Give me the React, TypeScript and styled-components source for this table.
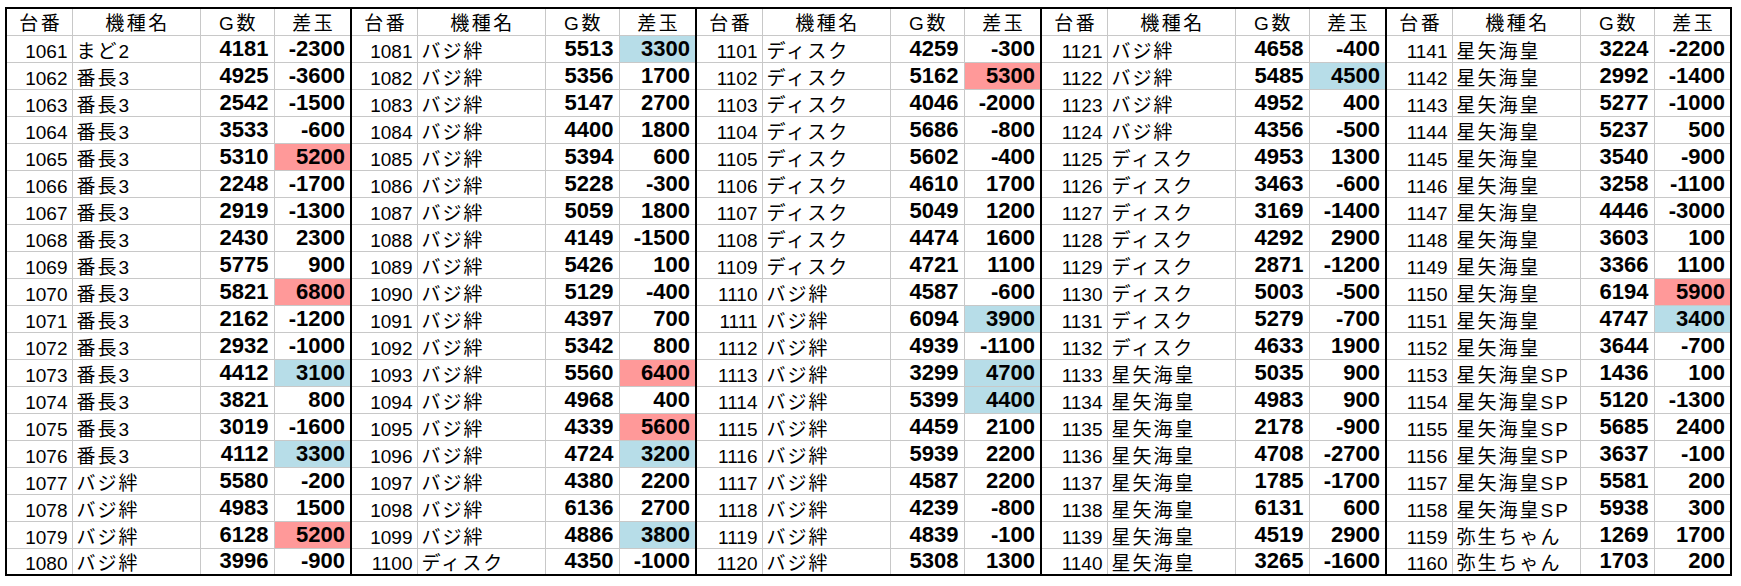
import styled, { createGlobalStyle } from "styled-components";

const GlobalStyle = createGlobalStyle`
  body {
    margin: 0;
    background: #ffffff;
  }
`;

type Row = [number, string, number, number];

const BAJI = "バジ絆";
const DISK = "ディスク";
const BAN = "番長3";
const SEIYA = "星矢海皇";
const SEIYA_SP = "星矢海皇SP";
const YAYOI = "弥生ちゃん";

const groups: Row[][] = [
  [
    [1061, "まど2", 4181, -2300],
    [1062, BAN, 4925, -3600],
    [1063, BAN, 2542, -1500],
    [1064, BAN, 3533, -600],
    [1065, BAN, 5310, 5200],
    [1066, BAN, 2248, -1700],
    [1067, BAN, 2919, -1300],
    [1068, BAN, 2430, 2300],
    [1069, BAN, 5775, 900],
    [1070, BAN, 5821, 6800],
    [1071, BAN, 2162, -1200],
    [1072, BAN, 2932, -1000],
    [1073, BAN, 4412, 3100],
    [1074, BAN, 3821, 800],
    [1075, BAN, 3019, -1600],
    [1076, BAN, 4112, 3300],
    [1077, BAJI, 5580, -200],
    [1078, BAJI, 4983, 1500],
    [1079, BAJI, 6128, 5200],
    [1080, BAJI, 3996, -900],
  ],
  [
    [1081, BAJI, 5513, 3300],
    [1082, BAJI, 5356, 1700],
    [1083, BAJI, 5147, 2700],
    [1084, BAJI, 4400, 1800],
    [1085, BAJI, 5394, 600],
    [1086, BAJI, 5228, -300],
    [1087, BAJI, 5059, 1800],
    [1088, BAJI, 4149, -1500],
    [1089, BAJI, 5426, 100],
    [1090, BAJI, 5129, -400],
    [1091, BAJI, 4397, 700],
    [1092, BAJI, 5342, 800],
    [1093, BAJI, 5560, 6400],
    [1094, BAJI, 4968, 400],
    [1095, BAJI, 4339, 5600],
    [1096, BAJI, 4724, 3200],
    [1097, BAJI, 4380, 2200],
    [1098, BAJI, 6136, 2700],
    [1099, BAJI, 4886, 3800],
    [1100, DISK, 4350, -1000],
  ],
  [
    [1101, DISK, 4259, -300],
    [1102, DISK, 5162, 5300],
    [1103, DISK, 4046, -2000],
    [1104, DISK, 5686, -800],
    [1105, DISK, 5602, -400],
    [1106, DISK, 4610, 1700],
    [1107, DISK, 5049, 1200],
    [1108, DISK, 4474, 1600],
    [1109, DISK, 4721, 1100],
    [1110, BAJI, 4587, -600],
    [1111, BAJI, 6094, 3900],
    [1112, BAJI, 4939, -1100],
    [1113, BAJI, 3299, 4700],
    [1114, BAJI, 5399, 4400],
    [1115, BAJI, 4459, 2100],
    [1116, BAJI, 5939, 2200],
    [1117, BAJI, 4587, 2200],
    [1118, BAJI, 4239, -800],
    [1119, BAJI, 4839, -100],
    [1120, BAJI, 5308, 1300],
  ],
  [
    [1121, BAJI, 4658, -400],
    [1122, BAJI, 5485, 4500],
    [1123, BAJI, 4952, 400],
    [1124, BAJI, 4356, -500],
    [1125, DISK, 4953, 1300],
    [1126, DISK, 3463, -600],
    [1127, DISK, 3169, -1400],
    [1128, DISK, 4292, 2900],
    [1129, DISK, 2871, -1200],
    [1130, DISK, 5003, -500],
    [1131, DISK, 5279, -700],
    [1132, DISK, 4633, 1900],
    [1133, SEIYA, 5035, 900],
    [1134, SEIYA, 4983, 900],
    [1135, SEIYA, 2178, -900],
    [1136, SEIYA, 4708, -2700],
    [1137, SEIYA, 1785, -1700],
    [1138, SEIYA, 6131, 600],
    [1139, SEIYA, 4519, 2900],
    [1140, SEIYA, 3265, -1600],
  ],
  [
    [1141, SEIYA, 3224, -2200],
    [1142, SEIYA, 2992, -1400],
    [1143, SEIYA, 5277, -1000],
    [1144, SEIYA, 5237, 500],
    [1145, SEIYA, 3540, -900],
    [1146, SEIYA, 3258, -1100],
    [1147, SEIYA, 4446, -3000],
    [1148, SEIYA, 3603, 100],
    [1149, SEIYA, 3366, 1100],
    [1150, SEIYA, 6194, 5900],
    [1151, SEIYA, 4747, 3400],
    [1152, SEIYA, 3644, -700],
    [1153, SEIYA_SP, 1436, 100],
    [1154, SEIYA_SP, 5120, -1300],
    [1155, SEIYA_SP, 5685, 2400],
    [1156, SEIYA_SP, 3637, -100],
    [1157, SEIYA_SP, 5581, 200],
    [1158, SEIYA_SP, 5938, 300],
    [1159, YAYOI, 1269, 1700],
    [1160, YAYOI, 1703, 200],
  ],
];

const colWidths = [66, 128, 74, 77];
const headers = ["台番", "機種名", "G数", "差玉"];

type Fill = "none" | "red" | "blue";

// 5000以上は赤、3000以上は青
const fillFor = (diff: number): Fill =>
  diff >= 5000 ? "red" : diff >= 3000 ? "blue" : "none";

const fillColors: Record<Fill, string> = {
  none: "transparent",
  red: "#ff9999",
  blue: "#b7dde8",
};

export default function App() {
  return (
    <>
      <GlobalStyle />
      <Page>
        <Sheet>
          <colgroup>
            {groups.map((_, g) =>
              colWidths.map((w, c) => <col key={`${g}-${c}`} style={{ width: w }} />)
            )}
          </colgroup>
          <thead>
            <tr>
              {groups.map((_, g) =>
                headers.map((h, c) => (
                  <HeadCell key={`${g}-${c}`} $groupStart={c === 0}>
                    {h}
                  </HeadCell>
                ))
              )}
            </tr>
          </thead>
          <tbody>
            {groups[0].map((_, r) => (
              <tr key={r}>
                {groups.map((group, g) => {
                  const [no, name, games, diff] = group[r];
                  return [
                    <NumCell key={`${g}-no`} $groupStart>
                      {no}
                    </NumCell>,
                    <NameCell key={`${g}-name`}>{name}</NameCell>,
                    <ValueCell key={`${g}-g`}>{games}</ValueCell>,
                    <ValueCell key={`${g}-d`} $fill={fillFor(diff)}>
                      {diff}
                    </ValueCell>,
                  ];
                })}
              </tr>
            ))}
          </tbody>
        </Sheet>
      </Page>
    </>
  );
}

const Page = styled.div`
  padding: 7px 0 0 5px;
`;

const Sheet = styled.table`
  border-collapse: collapse;
  table-layout: fixed;
  border: 2px solid #000000;
  font-family: "Liberation Sans", "Noto Sans CJK JP", sans-serif;
  color: #000000;

  tr {
    height: 27px;
  }
`;

const BaseCell = styled.td<{ $groupStart?: boolean }>`
  box-sizing: border-box;
  height: 27px;
  padding: 0 5px 2px 5px;
  border: 1px solid #c8c8c8;
  border-left: ${(p) => (p.$groupStart ? "2px solid #000000" : "1px solid #c8c8c8")};
  vertical-align: bottom;
  line-height: 1;
  white-space: nowrap;
  overflow: hidden;
`;

const HeadCell = styled(BaseCell).attrs({ as: "th" })`
  font-size: 19px;
  font-weight: 400;
  letter-spacing: 2.5px;
  text-align: center;
  border-top: 2px solid #000000;
  padding: 0 0 2px 3px;
`;

const NumCell = styled(BaseCell)`
  font-size: 19px;
  text-align: right;
  padding-right: 4px;
  padding-bottom: 1px;
`;

const NameCell = styled(BaseCell)`
  font-size: 19px;
  letter-spacing: 2px;
  text-align: left;
  padding-left: 4px;
  padding-bottom: 1px;
`;

const ValueCell = styled(BaseCell)<{ $fill?: Fill }>`
  font-size: 22px;
  font-weight: 700;
  text-align: right;
  padding-right: 5px;
  padding-bottom: 2px;
  background: ${(p) => fillColors[p.$fill ?? "none"]};
`;
